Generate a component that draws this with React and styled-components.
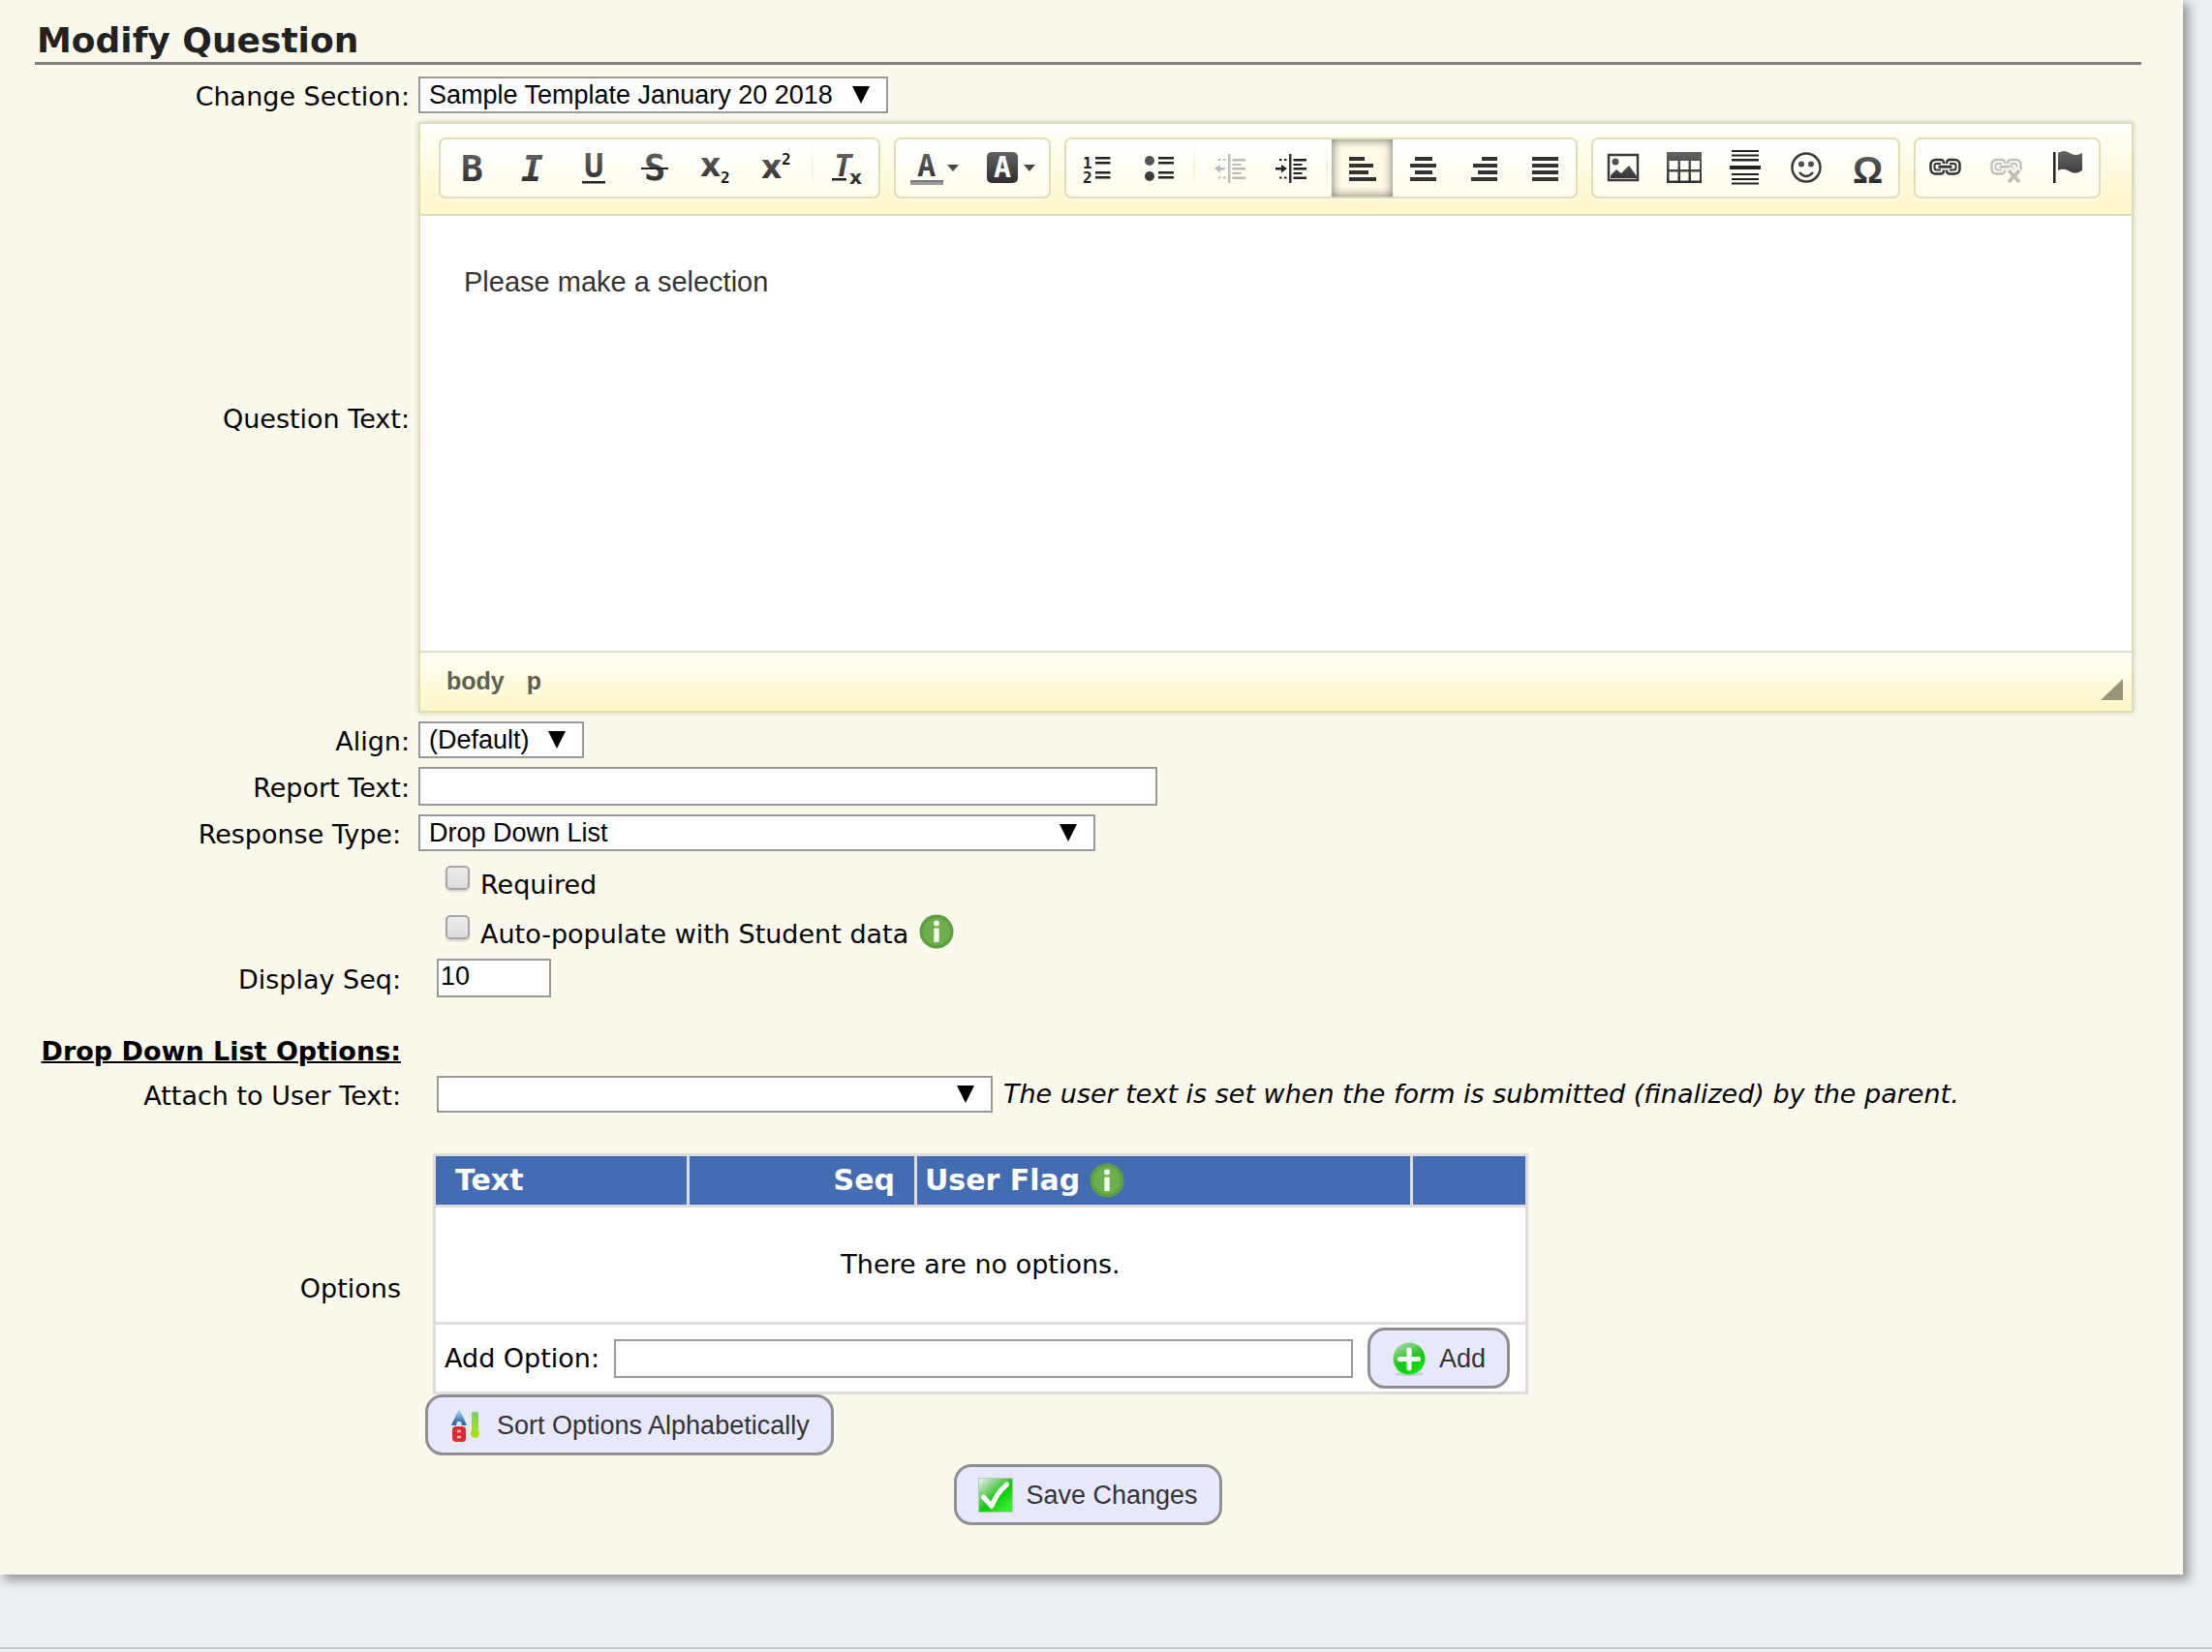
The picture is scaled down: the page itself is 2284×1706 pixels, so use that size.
import React from "react";
import styled, { createGlobalStyle, css } from "styled-components";

const sans = `"DejaVu Sans", Verdana, sans-serif`;
const arial = `"Liberation Sans", Arial, sans-serif`;
const mono = `"DejaVu Sans Mono", monospace`;

const GlobalStyle = createGlobalStyle`
  *, *::before, *::after { box-sizing: border-box; }
  body {
    margin: 0;
    background: #ebeef3;
    color: #000;
    font-family: ${sans};
    font-size: 27px;
    line-height: 32px;
  }
`;

const Card = styled.main`
  margin-right: 30px;
  padding: 20px 43px 51px 36px;
  background: #fbf9eb;
  box-shadow: 5px 5px 10px 1px rgba(0, 0, 0, 0.36);
`;

const Title = styled.h1`
  margin: 0 0 12px;
  padding-left: 2px;
  border-bottom: 3px solid #808080;
  color: #222;
  font-size: 36px;
  line-height: 44px;
  font-weight: bold;
`;

const Form = styled.form`
  display: flex;
  flex-direction: column;
  gap: 9px;
`;

const Row = styled.div`
  display: flex;
  align-items: center;
  padding-right: 8px;
  margin-top: ${(p) => p.$space || 0}px;
`;

const labelBox = css`
  flex: none;
  width: 396px;
  padding-top: 3px;
  padding-right: ${(p) => (p.$inset ? 18 : 9)}px;
  padding-bottom: ${(p) => p.$below || 0}px;
  text-align: right;
  white-space: nowrap;
`;

const Label = styled.label`
  ${labelBox}
`;

const RowCaption = styled.div`
  ${labelBox}
`;

const SectionTitle = styled.h2`
  ${labelBox}
  margin: 0;
  font-size: 27px;
  line-height: 32px;
  font-weight: bold;
  text-decoration: underline;
  text-decoration-thickness: 2px;
`;

const Field = styled.div`
  flex: 1;
  min-width: 0;
  display: flex;
  align-items: center;
  gap: 11px;
  padding-left: ${(p) => p.$indent || 0}px;
`;

const arrow =
  "data:image/svg+xml,%3Csvg xmlns='http://www.w3.org/2000/svg' width='18' height='18'%3E%3Cpath d='M0 0H18L9 18Z'/%3E%3C/svg%3E";

const Select = styled.select`
  appearance: none;
  width: ${(p) => p.$width}px;
  height: 38px;
  margin: 0;
  padding: 0 44px 0 9px;
  border: 2px solid #999;
  border-radius: 0;
  background: #fff url("${arrow}") no-repeat right 17px top 8px;
  color: #000;
  font: 27px/32px ${arial};
`;

const TextInput = styled.input`
  width: ${(p) => p.$width}px;
  height: 40px;
  margin: 0;
  padding: 0 2px 3px;
  border: 2px solid #999;
  border-radius: 0;
  background: #fff;
  color: #000;
  font: 27px/32px ${arial};
`;

const CheckRow = styled.div`
  display: flex;
  align-items: flex-start;
  height: 42px;
  padding: 5px 0 0 424px;
`;

const Checkbox = styled.input`
  appearance: none;
  width: 25px;
  height: 25px;
  margin: 1px 11px 0 0;
  border: 2px solid #a6a6a6;
  border-radius: 5px;
  background: linear-gradient(#ededed, #dcdcdc);
  box-shadow: 0 2px 2px rgba(0, 0, 0, 0.14);
`;

const CheckLabel = styled.label`
  margin-right: 11px;
  line-height: 42px;
`;

const Note = styled.em`
  white-space: nowrap;
`;

/* Rich text editor */

const Editor = styled.div`
  flex: 1;
  min-width: 0;
  border: 2px solid #e0dcb4;
  box-shadow: 0 0 6px rgba(0, 0, 0, 0.16);
  background: #fff;
`;

const Toolbar = styled.div`
  display: flex;
  flex-wrap: wrap;
  gap: 14px;
  padding: 14px 19px 16px;
  border-bottom: 2px solid #dfdbc0;
  background: linear-gradient(#fffefa, #fef6c8);
`;

const Group = styled.div`
  display: flex;
  height: 63px;
  border: 2px solid #e0dcb4;
  border-radius: 7px;
  background: linear-gradient(#fff, #fffcec);
  box-shadow: 0 2px 2px rgba(255, 255, 255, 0.5);
`;

const Tool = styled.button`
  display: flex;
  align-items: center;
  gap: 4px;
  height: 59px;
  margin: 0;
  padding: 0 14px;
  border: 0;
  background: ${(p) => (p.$active ? "#fffbe6" : "none")};
  box-shadow: ${(p) => (p.$active ? "inset 0 0 10px 1px rgba(0, 0, 0, 0.5)" : "none")};
  opacity: ${(p) => (p.disabled ? 0.3 : 1)};
`;

const Separator = styled.span`
  width: 2px;
  height: 42px;
  margin: 9px 4px 8px 5px;
  background: linear-gradient(#fffef8, #f8f1d4, #fffcec);
`;

const Glyph = styled.svg`
  display: block;
  flex: none;
  width: 35px;
  height: 37px;
  overflow: visible;
  fill: url(#ink);
  font-family: ${mono};
  font-weight: bold;
`;

const Caret = styled.svg`
  width: 12px;
  height: 7px;
  fill: #474747;
`;

const Content = styled.textarea`
  display: block;
  width: 100%;
  height: 449px;
  margin: 0;
  padding: 51px 45px;
  border: 0;
  outline: 0;
  resize: none;
  background: #fff;
  color: #333;
  font: 29px/34px ${arial};
`;

const StatusBar = styled.div`
  display: flex;
  justify-content: space-between;
  height: 62px;
  padding: 13px 9px 11px 27px;
  border-top: 2px solid #dfdbc0;
  background: linear-gradient(#fffef6, #fef6c8);
`;

const PathList = styled.nav`
  display: flex;
  gap: 23px;
`;

const PathLink = styled.a`
  color: #60604c;
  font: bold 25px/32px ${arial};
  text-decoration: none;
  text-shadow: 0 2px 0 rgba(255, 255, 255, 0.7);
`;

const Resizer = styled.svg`
  align-self: flex-end;
  width: 23px;
  height: 22px;
  fill: #9a9478;
`;

/* Options table */

const OptionsBlock = styled.div`
  display: flex;
  flex-direction: column;
  align-items: flex-start;
`;

const OptionsTable = styled.table`
  width: 1131px;
  margin-left: 15px;
  border-collapse: collapse;
  table-layout: fixed;
  background: #fff;
`;

const HeadCell = styled.th`
  width: ${(p) => p.$width}px;
  height: 53px;
  padding: ${(p) => p.$pad || "0"};
  border: 3px solid #ddd;
  background: #446cb3;
  color: #fff;
  font-size: 30px;
  line-height: 36px;
  text-align: ${(p) => p.$align || "left"};
`;

const HeadInner = styled.span`
  display: flex;
  align-items: center;
  gap: 10px;
`;

const EmptyCell = styled.td`
  height: 121px;
  padding: 0;
  border: 3px solid #ddd;
  text-align: center;
`;

const AddCell = styled.td`
  height: 72px;
  padding: 0 16px 0 9px;
  border: 3px solid #ddd;
`;

const AddLine = styled.div`
  display: flex;
  align-items: center;
  justify-content: space-between;
`;

const Button = styled.button`
  display: inline-flex;
  align-items: center;
  gap: 13px;
  height: 63px;
  margin: 0 0 0 ${(p) => p.$left || 0}px;
  padding: 0 22px;
  border: 3px solid #8f8f8f;
  border-radius: 18px;
  background: #e8e8fc;
  color: #333;
  font: 27px/32px ${arial};
  white-space: nowrap;
`;

const Picture = styled.svg`
  display: block;
  flex: none;
  width: 36px;
  height: 36px;
  overflow: visible;
`;

const Actions = styled.div`
  display: flex;
  justify-content: center;
`;

const Footer = styled.footer`
  margin-top: 75px;
  border-top: 2px solid #c6c9cb;
`;

/* Icon drawings */

const InfoIcon = () => (
  <Picture viewBox="0 0 36 36" role="img" aria-label="Information">
    <circle cx="18" cy="18" r="17.5" fill="#5f9e42" />
    <circle cx="18" cy="18" r="14" fill="#6fae4c" />
    <circle cx="18" cy="9.5" r="3" fill="#f4faf0" />
    <rect x="15.3" y="14.5" width="5.4" height="14.5" rx="1" fill="#f4faf0" />
  </Picture>
);

const AddIcon = () => (
  <Picture viewBox="0 0 36 36" aria-hidden="true">
    <defs>
      <linearGradient id="plus" x1="0.2" y1="0" x2="0.7" y2="1">
        <stop offset="0" stopColor="#a8dca4" />
        <stop offset="0.5" stopColor="#2cc628" />
        <stop offset="0.7" stopColor="#04d400" />
        <stop offset="1" stopColor="#20e41c" />
      </linearGradient>
    </defs>
    <ellipse cx="18" cy="34" rx="15" ry="2" fill="#c9cbdc" />
    <circle cx="18" cy="18" r="16.5" fill="url(#plus)" />
    <path d="M18 9V28M8.500 18.500H27.500" stroke="#fff" strokeWidth="5" strokeLinecap="round" />
  </Picture>
);

const SaveIcon = () => (
  <Picture viewBox="0 0 36 36" aria-hidden="true">
    <defs>
      <linearGradient id="tick" x1="0" y1="0" x2="0.8" y2="0.9">
        <stop offset="0" stopColor="#f2f8f2" />
        <stop offset="0.35" stopColor="#7fcf7c" />
        <stop offset="0.65" stopColor="#08cc04" />
        <stop offset="1" stopColor="#3ce838" />
      </linearGradient>
    </defs>
    <rect x="0.500" y="0.500" width="35" height="35" fill="url(#tick)" stroke="#b4c8bc" />
    <path d="M5.500 20L14 29.500Q19 16 29.500 7" fill="none" stroke="#fff" strokeWidth="5" strokeLinecap="round" strokeLinejoin="round" />
  </Picture>
);

const SortIcon = () => (
  <Picture viewBox="0 0 36 36" aria-hidden="true">
    <defs>
      <linearGradient id="sortBlue" x1="0" y1="0" x2="0" y2="1">
        <stop offset="0.1" stopColor="#c4e4f4" />
        <stop offset="0.8" stopColor="#2f6db0" />
      </linearGradient>
      <linearGradient id="sortGreen" x1="0" y1="0" x2="0" y2="1">
        <stop offset="0" stopColor="#7ccc68" />
        <stop offset="1" stopColor="#a4e414" />
      </linearGradient>
    </defs>
    <path d="M10 0L18 18H13L12 14H8L7 18H2Z" fill="url(#sortBlue)" />
    <rect x="3" y="19" width="14" height="16" rx="4" fill="#dc2c30" />
    <path d="M8 24H12M8 30H12" stroke="#f4b4b4" strokeWidth="2.500" />
    <rect x="23" y="4" width="7" height="22" rx="2" fill="url(#sortGreen)" />
    <circle cx="26.500" cy="26.500" r="4.500" fill="#a4e01c" />
  </Picture>
);

const Bars = ({ rows }) => (
  <Glyph viewBox="0 0 35 37">
    {rows.map(([x, w], i) => (
      <rect key={i} x={x} y={7 + i * 7} width={w} height="4" fill="#333" />
    ))}
  </Glyph>
);

const IndentGlyph = ({ arrowPath }) => (
  <Glyph viewBox="0 0 35 37">
    <rect x="16" y="4" width="2.500" height="30" fill="#333" />
    <path
      fill="#222"
      d="M20.500 9h13.500v2.500h-13.500zM20.500 14h9v2h-9zM20.500 18h13.500v2.500h-13.500zM20.500 23h9v2h-9zM20.500 27.500h13.500v2.500h-13.500zM6 9h2.500v2h-2.500zM11 9h2.500v2h-2.500zM6 27.500h2.500v2h-2.500zM11 27.500h2.500v2h-2.500z"
    />
    <path fill="#222" d={arrowPath} />
  </Glyph>
);

const Chain = () => (
  <g fill="none" stroke="#333" strokeWidth="2.500">
    <path d="M15 20.500V21.500a3 3 0 0 1-3 3H6.500a5 5 0 0 1-5-5V15a5 5 0 0 1 5-5H12a3 3 0 0 1 3 3V14" />
    <path d="M18 20.500V21.500a3 3 0 0 0 3 3H26.500a5 5 0 0 0 5-5V15a5 5 0 0 0-5-5H21a3 3 0 0 0-3 3V14" />
    <path d="M12 14H7.500a2 2 0 0 0-2 2v2.500a2 2 0 0 0 2 2H12M21 14H25.500a2 2 0 0 1 2 2v2.500a2 2 0 0 1-2 2H21" strokeWidth="2" />
    <path d="M9.500 17.200H23.500" strokeWidth="3" />
  </g>
);

const box = "0 0 35 37";

const glyphs = {
  bold: <Glyph viewBox={box}><text x="7" y="32" fontSize="38">B</text></Glyph>,
  italic: <Glyph viewBox={box}><text x="6" y="32" fontSize="38" fontStyle="italic">I</text></Glyph>,
  underline: (
    <Glyph viewBox={box}>
      <text x="8" y="28" fontSize="34">U</text>
      <rect x="6" y="32" width="24" height="2.500" fill="#222" />
    </Glyph>
  ),
  strike: (
    <Glyph viewBox={box}>
      <text x="7" y="31" fontSize="37">S</text>
      <rect x="4" y="18" width="28" height="2" fill="#222" />
    </Glyph>
  ),
  sub: (
    <Glyph viewBox={box}>
      <text x="2" y="27" fontSize="33" fontFamily="DejaVu Sans">x</text>
      <text x="23" y="34" fontSize="16" fill="#1c1c1c">2</text>
    </Glyph>
  ),
  sup: (
    <Glyph viewBox={box}>
      <text x="2" y="29" fontSize="33" fontFamily="DejaVu Sans">x</text>
      <text x="23" y="15" fontSize="16" fill="#1c1c1c">2</text>
    </Glyph>
  ),
  clear: (
    <Glyph viewBox={box}>
      <text x="3" y="27" fontSize="32" fontStyle="italic">T</text>
      <rect x="1" y="29" width="15" height="2.500" fill="#222" />
      <text x="19" y="35" fontSize="20" fontFamily="DejaVu Sans">x</text>
    </Glyph>
  ),
  color: (
    <Glyph viewBox={box}>
      <text x="8" y="27" fontSize="32">A</text>
      <rect x="1" y="31" width="34" height="5" fill="#999" />
      <rect x="1" y="31" width="34" height="2" fill="#777" />
    </Glyph>
  ),
  background: (
    <Glyph viewBox={box}>
      <rect x="1" y="2" width="32" height="32" rx="5" />
      <text x="8" y="28" fontSize="30" fill="#fff">A</text>
    </Glyph>
  ),
  numbered: (
    <Glyph viewBox={box}>
      <text x="3" y="19" fontSize="16" fill="#222">1</text>
      <text x="3" y="34" fontSize="16" fill="#222">2</text>
      <path fill="#222" d="M16 7h15.500v2.500h-15.500zM16 12h15.500v2.500h-15.500zM16 22h15.500v2.500h-15.500zM16 27h15.500v2.500h-15.500z" />
    </Glyph>
  ),
  bulleted: (
    <Glyph viewBox={box}>
      <circle cx="9" cy="11" r="5" fill="#555" />
      <circle cx="9" cy="27" r="5" fill="#3a3a3a" />
      <path fill="#222" d="M18 7h16v2.500h-16zM18 12h16v2.500h-16zM18 22h16v2.500h-16zM18 27h16v2.500h-16z" />
    </Glyph>
  ),
  outdent: <IndentGlyph arrowPath="M2 19l6-4v3h5v2.500H8v3z" />,
  indent: <IndentGlyph arrowPath="M14 19l-6-4v3H2v2.500h6v3z" />,
  left: <Bars rows={[[4, 16], [4, 25], [4, 20], [4, 28]]} />,
  center: <Bars rows={[[9, 18], [4, 27], [9, 18], [4, 27]]} />,
  right: <Bars rows={[[15, 16], [6, 25], [11, 20], [4, 27]]} />,
  justify: <Bars rows={[[4, 27], [4, 27], [4, 27], [4, 27]]} />,
  image: (
    <Glyph viewBox={box}>
      <rect x="2" y="5" width="30" height="26" fill="none" stroke="#3a3a3a" strokeWidth="2.500" />
      <circle cx="9" cy="12" r="3.500" />
      <path d="M4 29V26L10 20L15 24L23 16L31 27V29Z" />
    </Glyph>
  ),
  table: (
    <Glyph viewBox={box}>
      <path fillRule="evenodd" d="M-1 2H35V34H-1ZM1.500 11V20H10.500V11ZM13 11V20H21.500V11ZM24 11V20H33V11ZM1.500 22.500V31.500H10.500V22.500ZM13 22.500V31.500H21.500V22.500ZM24 22.500V31.500H33V22.500Z" />
    </Glyph>
  ),
  rule: (
    <Glyph viewBox={box}>
      <path fill="#222" d="M3 0h28v2h-28zM3 4.500h28v2h-28zM3 9h28v2.500h-28zM1 16h32v4h-32zM3 24h28v2h-28zM3 29h28v2h-28zM3 33.500h28v2h-28z" />
    </Glyph>
  ),
  smiley: (
    <Glyph viewBox={box}>
      <circle cx="17" cy="18" r="14.500" fill="none" stroke="#3a3a3a" strokeWidth="2.500" />
      <circle cx="12" cy="14.500" r="3" />
      <circle cx="22" cy="14.500" r="3" />
      <path d="M10 23Q17 31 24 23" fill="none" stroke="#3a3a3a" strokeWidth="2.500" />
    </Glyph>
  ),
  omega: (
    <Glyph viewBox={box}>
      <text x="2" y="34" fontSize="39" fontFamily="Liberation Sans">Ω</text>
    </Glyph>
  ),
  link: <Glyph viewBox={box}><Chain /></Glyph>,
  unlink: (
    <Glyph viewBox={box}>
      <Chain />
      <path d="M18 20L31 33M31 20L18 33" stroke="#fff" strokeWidth="8" />
      <path d="M19 21L30 33M30 21L19 33" stroke="#333" strokeWidth="4" />
    </Glyph>
  ),
  anchor: (
    <Glyph viewBox={box}>
      <rect x="2" y="2" width="2.500" height="32" fill="#222" />
      <path d="M7 3Q13 -1 19 3T32 3V21Q25 26 19 22T7 21Z" />
    </Glyph>
  ),
};

const toolbar = [
  [["Bold", "bold"], ["Italic", "italic"], ["Underline", "underline"], ["Strikethrough", "strike"], ["Subscript", "sub"], ["Superscript", "sup"], null, ["Remove Format", "clear"]],
  [["Text Color", "color", "menu"], ["Background Color", "background", "menu"]],
  [["Numbered List", "numbered"], ["Bulleted List", "bulleted"], null, ["Decrease Indent", "outdent", "off"], ["Increase Indent", "indent"], null, ["Align Left", "left", "active"], ["Center", "center"], ["Align Right", "right"], ["Justify", "justify"]],
  [["Image", "image"], ["Table", "table"], ["Horizontal Line", "rule"], ["Smiley", "smiley"], ["Special Character", "omega"]],
  [["Link", "link"], ["Unlink", "unlink", "off"], ["Anchor", "anchor"]],
];

const EditorToolbar = () => (
  <Toolbar role="toolbar" aria-label="Formatting">
    {toolbar.map((group, g) => (
      <Group key={g}>
        {group.map((tool, i) =>
          tool ? (
            <Tool key={i} type="button" aria-label={tool[0]} disabled={tool[2] === "off"} $active={tool[2] === "active"}>
              {glyphs[tool[1]]}
              {tool[2] === "menu" && (
                <Caret viewBox="0 0 12 7">
                  <path d="M0 0H12L6 7Z" />
                </Caret>
              )}
            </Tool>
          ) : (
            <Separator key={i} />
          )
        )}
      </Group>
    ))}
  </Toolbar>
);

const Defs = styled.svg`
  position: absolute;
  width: 0;
  height: 0;
`;

const InkGradient = () => (
  <Defs aria-hidden="true">
    <linearGradient id="ink" gradientUnits="userSpaceOnUse" x1="0" y1="2" x2="0" y2="35">
      <stop offset="0" stopColor="#636363" />
      <stop offset="1" stopColor="#2c2c2c" />
    </linearGradient>
  </Defs>
);

export default function App() {
  return (
    <>
      <GlobalStyle />
      <InkGradient />
      <Card>
        <Title>Modify Question</Title>
        <Form onSubmit={(e) => e.preventDefault()}>
          <Row>
            <Label htmlFor="section">Change Section:</Label>
            <Field>
              <Select id="section" $width={485}>
                <option>Sample Template January 20 2018</option>
              </Select>
            </Field>
          </Row>
          <Row>
            <Label htmlFor="question">Question Text:</Label>
            <Editor>
              <EditorToolbar />
              <Content id="question" defaultValue="Please make a selection" />
              <StatusBar>
                <PathList aria-label="Element path">
                  <PathLink href="#body">body</PathLink>
                  <PathLink href="#p">p</PathLink>
                </PathList>
                <Resizer viewBox="0 0 23 22" aria-hidden="true">
                  <path d="M23 0V22H0Z" />
                </Resizer>
              </StatusBar>
            </Editor>
          </Row>
          <Row>
            <Label htmlFor="align">Align:</Label>
            <Field>
              <Select id="align" $width={171}>
                <option>(Default)</option>
              </Select>
            </Field>
          </Row>
          <Row>
            <Label htmlFor="report">Report Text:</Label>
            <Field>
              <TextInput id="report" $width={763} />
            </Field>
          </Row>
          <Row>
            <Label htmlFor="type" $inset>Response Type:</Label>
            <Field>
              <Select id="type" $width={699}>
                <option>Drop Down List</option>
              </Select>
            </Field>
          </Row>
          <CheckRow>
            <Checkbox id="required" type="checkbox" />
            <CheckLabel htmlFor="required">Required</CheckLabel>
          </CheckRow>
          <CheckRow>
            <Checkbox id="auto" type="checkbox" />
            <CheckLabel htmlFor="auto">Auto-populate with Student data</CheckLabel>
            <InfoIcon />
          </CheckRow>
          <Row>
            <Label htmlFor="seq" $inset>Display Seq:</Label>
            <Field $indent={19}>
              <TextInput id="seq" $width={118} defaultValue="10" />
            </Field>
          </Row>
          <Row $space={28}>
            <SectionTitle $inset>Drop Down List Options:</SectionTitle>
          </Row>
          <Row>
            <Label htmlFor="attach" $inset>Attach to User Text:</Label>
            <Field $indent={19}>
              <Select id="attach" $width={574}>
                <option></option>
              </Select>
              <Note>The user text is set when the form is submitted (finalized) by the parent.</Note>
            </Field>
          </Row>
          <Row $space={33}>
            <RowCaption $inset $below={36}>Options</RowCaption>
            <OptionsBlock>
              <OptionsTable>
                <thead>
                  <tr>
                    <HeadCell $width={262} $pad="0 0 0 20px">Text</HeadCell>
                    <HeadCell $width={235} $pad="0 20px 0 0" $align="right">Seq</HeadCell>
                    <HeadCell $width={512} $pad="0 0 0 8px">
                      <HeadInner>
                        User Flag <InfoIcon />
                      </HeadInner>
                    </HeadCell>
                    <HeadCell $width={119} />
                  </tr>
                </thead>
                <tbody>
                  <tr>
                    <EmptyCell colSpan={4}>There are no options.</EmptyCell>
                  </tr>
                  <tr>
                    <AddCell colSpan={4}>
                      <AddLine>
                        <label htmlFor="option">Add Option:</label>
                        <TextInput id="option" $width={763} />
                        <Button type="button">
                          <AddIcon />
                          Add
                        </Button>
                      </AddLine>
                    </AddCell>
                  </tr>
                </tbody>
              </OptionsTable>
              <Button type="button" $left={7}>
                <SortIcon />
                Sort Options Alphabetically
              </Button>
            </OptionsBlock>
          </Row>
          <Actions>
            <Button type="submit">
              <SaveIcon />
              Save Changes
            </Button>
          </Actions>
        </Form>
      </Card>
      <Footer />
    </>
  );
}
